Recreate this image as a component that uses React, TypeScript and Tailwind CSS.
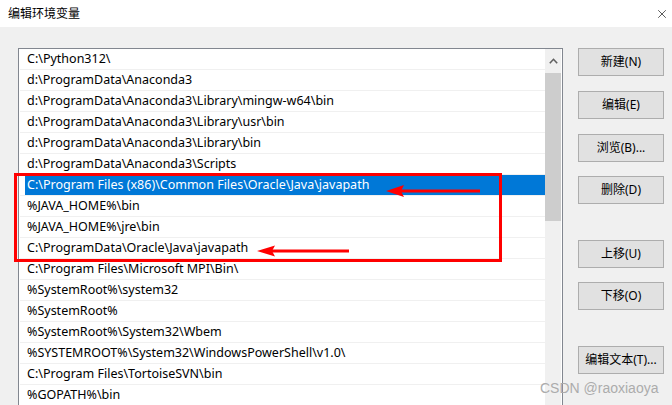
import { X } from "lucide-react";

const PATHS = [
  "C:\\Python312\\",
  "d:\\ProgramData\\Anaconda3",
  "d:\\ProgramData\\Anaconda3\\Library\\mingw-w64\\bin",
  "d:\\ProgramData\\Anaconda3\\Library\\usr\\bin",
  "d:\\ProgramData\\Anaconda3\\Library\\bin",
  "d:\\ProgramData\\Anaconda3\\Scripts",
  "C:\\Program Files (x86)\\Common Files\\Oracle\\Java\\javapath",
  "%JAVA_HOME%\\bin",
  "%JAVA_HOME%\\jre\\bin",
  "C:\\ProgramData\\Oracle\\Java\\javapath",
  "C:\\Program Files\\Microsoft MPI\\Bin\\",
  "%SystemRoot%\\system32",
  "%SystemRoot%",
  "%SystemRoot%\\System32\\Wbem",
  "%SYSTEMROOT%\\System32\\WindowsPowerShell\\v1.0\\",
  "C:\\Program Files\\TortoiseSVN\\bin",
  "%GOPATH%\\bin",
];

const SELECTED = 6;

const BUTTONS = [
  { label: "新建(N)", gap: "mt-0" },
  { label: "编辑(E)", gap: "mt-[15px]" },
  { label: "浏览(B)...", gap: "mt-[15px]" },
  { label: "删除(D)", gap: "mt-[14px]" },
  { label: "上移(U)", gap: "mt-[36px]" },
  { label: "下移(O)", gap: "mt-[14px]" },
  { label: "编辑文本(T)...", gap: "mt-[36px]" },
];

function PathRow({ text, selected }: { text: string; selected: boolean }) {
  return (
    <div className="h-[21px] border-b border-[#f0f0f0] pl-[1px]">
      <div
        className={
          selected
            ? "ml-[4px] flex h-full items-center bg-[#0078d7] pl-[2px] pt-[1px] text-white"
            : "ml-[4px] flex h-full items-center pl-[2px] pt-[1px] text-black"
        }
      >
        {text}
      </div>
    </div>
  );
}

function Annotations() {
  return (
    <svg className="pointer-events-none absolute inset-0" width="672" height="405" viewBox="0 0 672 405">
      <rect x="15.5" y="174.5" width="485" height="86" fill="none" stroke="#ff0000" strokeWidth="3" />
      <line x1="480" y1="191" x2="400" y2="191" stroke="#ff0000" strokeWidth="3" />
      <polygon points="386,191 404,185 401,191 404,197" fill="#ff0000" />
      <line x1="349" y1="251" x2="270" y2="251" stroke="#ff0000" strokeWidth="3" />
      <polygon points="257,251 275,245.5 272,251 275,256.5" fill="#ff0000" />
    </svg>
  );
}

export default function App() {
  return (
    <div
      className="relative h-[405px] w-[672px] overflow-hidden bg-[#f0f0f0] text-[12px] text-black"
      style={{ fontFamily: '"Noto Sans", "Noto Sans CJK SC", sans-serif' }}
    >
      <div className="flex h-[27px] items-center justify-between bg-white pl-[8px] pr-[3px]">
        <span className="text-[12px]">编辑环境变量</span>
        <X className="h-[14px] w-[14px] text-black" strokeWidth={1.1} />
      </div>

      <div className="flex items-start pl-[18px] pt-[21px]">
        <div className="flex h-[400px] w-[545px] border border-[#828790] bg-white">
          <div className="flex-1 pl-[1px] text-[12.5px] leading-none">
            {PATHS.map((path, index) => (
              <PathRow key={path} text={path} selected={index === SELECTED} />
            ))}
          </div>
          <div className="mr-[1px] flex w-[16px] flex-col bg-[#f0f0f0]">
            <div className="flex h-[24px] items-center justify-center">
              <svg width="9" height="6" viewBox="0 0 9 6">
                <path d="M0.8 5.2 L4.5 1.3 L8.2 5.2" fill="none" stroke="#606060" strokeWidth="1.6" />
              </svg>
            </div>
            <div className="h-[148px] bg-[#cdcdcd]" />
          </div>
        </div>

        <div className="ml-[15px] flex flex-col">
          {BUTTONS.map((button) => (
            <button
              key={button.label}
              type="button"
              className={`${button.gap} flex h-[28px] w-[86px] items-center justify-center border border-[#adadad] bg-[#e1e1e1] text-[12px] text-black`}
            >
              {button.label}
            </button>
          ))}
        </div>
      </div>

      <Annotations />

      <div
        className="pointer-events-none absolute left-[540px] top-[380px] text-[14px] leading-[16px] text-[#acacac]"
        style={{ fontFamily: '"Liberation Sans", sans-serif' }}
      >
        CSDN @raoxiaoya
      </div>
    </div>
  );
}
